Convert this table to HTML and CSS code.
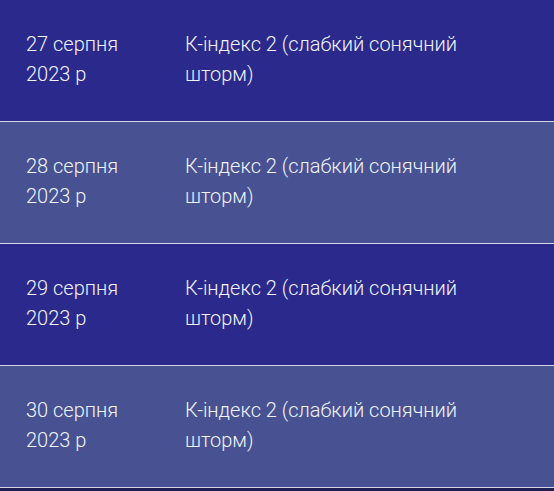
FILE: index.html
```html
<!DOCTYPE html>
<html lang="uk">
<head>
<meta charset="utf-8">
<link rel="stylesheet" href="styles.css">
</head>
<body>
<div class="table">
  <div class="row dark">
    <div class="date">27 серпня 2023 р</div>
    <div class="desc">К-індекс 2 (слабкий сонячний шторм)</div>
  </div>
  <div class="row light">
    <div class="date">28 серпня 2023 р</div>
    <div class="desc">К-індекс 2 (слабкий сонячний шторм)</div>
  </div>
  <div class="row dark">
    <div class="date">29 серпня 2023 р</div>
    <div class="desc">К-індекс 2 (слабкий сонячний шторм)</div>
  </div>
  <div class="row light">
    <div class="date">30 серпня 2023 р</div>
    <div class="desc">К-індекс 2 (слабкий сонячний шторм)</div>
  </div>
</div>
</body>
</html>
```
FILE: styles.css
```css
html, body {
  margin: 0;
  padding: 0;
  background: #1f1f55;
}
body {
  font-family: Roboto, "Noto Sans", sans-serif;
  font-size: 20px;
  font-weight: 300;
  line-height: 30px;
  color: #eef2fb;
}
.table {
  display: flex;
  flex-direction: column;
}
.row {
  display: grid;
  grid-template-columns: 159px 300px;
  height: 122px;
  box-sizing: border-box;
  padding: 29px 0 0 26px;
  border-bottom: 1px solid #d4d6e4;
}
.dark {
  background: #2b2a8c;
}
.light {
  background: #485292;
}
.date {
  padding-right: 30px;
}
```
